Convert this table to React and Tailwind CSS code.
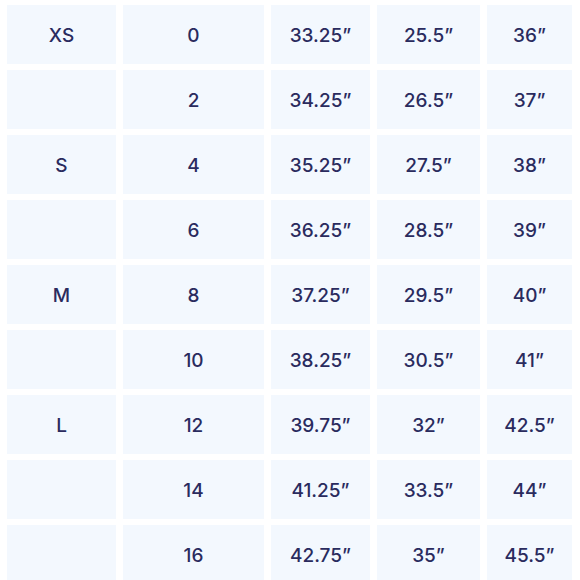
import React from "react";

const rows = [
  ["XS", "0", "33.25”", "25.5”", "36”"],
  ["", "2", "34.25”", "26.5”", "37”"],
  ["S", "4", "35.25”", "27.5”", "38”"],
  ["", "6", "36.25”", "28.5”", "39”"],
  ["M", "8", "37.25”", "29.5”", "40”"],
  ["", "10", "38.25”", "30.5”", "41”"],
  ["L", "12", "39.75”", "32”", "42.5”"],
  ["", "14", "41.25”", "33.5”", "44”"],
  ["", "16", "42.75”", "35”", "45.5”"],
];

export default function App() {
  return (
    <div className="w-[580px] h-[580px] overflow-hidden bg-white pl-[7px] pt-[5px]">
      <div
        className="grid grid-cols-[109px_141px_99px_103px_85px] auto-rows-[59px] gap-x-[7px] gap-y-[6px] text-[19px] font-medium text-[#2a2b5e]"
        style={{ fontFamily: 'Inter, "Open Sans", sans-serif' }}
      >
        {rows.map((r, i) =>
          r.map((c, j) => (
            <div
              key={i + "-" + j}
              className="bg-[#f3f8fe] flex items-center justify-center pt-[3px]"
            >
              {c}
            </div>
          ))
        )}
      </div>
    </div>
  );
}
